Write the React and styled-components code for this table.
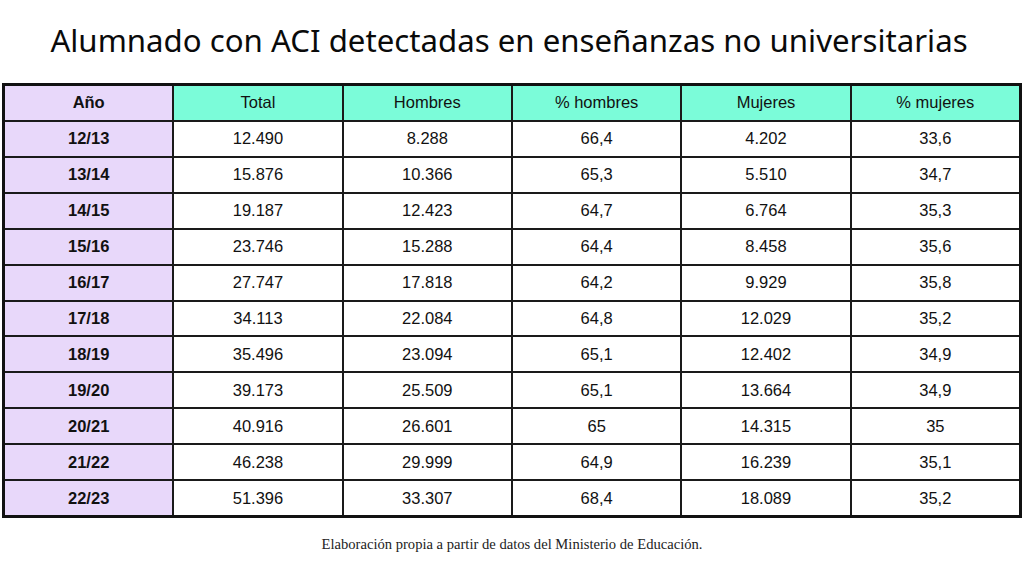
import React from "react";
import styled, { createGlobalStyle } from "styled-components";

const Global = createGlobalStyle`
  html, body { margin: 0; padding: 0; background: #ffffff; }
  body { width: 1024px; height: 576px; overflow: hidden; }
`;

const Page = styled.div`
  width: 1024px;
  height: 576px;
  display: flex;
  flex-direction: column;
  align-items: stretch;
  background: #fff;
`;

const Title = styled.h1`
  margin: 0;
  height: 83px;
  display: flex;
  align-items: center;
  justify-content: center;
  padding-right: 6px;
  padding-bottom: 4px;
  box-sizing: border-box;
  font-family: "Noto Sans", "DejaVu Sans", sans-serif;
  font-weight: 400;
  font-size: 31.2px;
  color: #0a0a0a;
`;

const TableWrap = styled.div`
  margin: 0 2px;
  height: 435px;
  box-sizing: border-box;
  border: 3px solid #111;
  background: #1a1a1a;
  display: grid;
  grid-template-columns: repeat(6, 1fr);
  grid-template-rows: repeat(12, 1fr);
  gap: 2px;
`;

const Cell = styled.div`
  display: flex;
  align-items: center;
  justify-content: center;
  font-family: "Liberation Sans", Arial, sans-serif;
  font-size: 16.5px;
  color: #111;
  font-weight: ${(p) => (p.$bold ? 700 : 400)};
  background: ${(p) =>
    p.$kind === "year" ? "#e8d8fa" : p.$kind === "head" ? "#7bfcd9" : "#ffffff"};
`;

const Footer = styled.p`
  margin: 0;
  padding-top: 18px;
  text-align: center;
  font-family: "Liberation Serif", "DejaVu Serif", serif;
  font-size: 14.6px;
  color: #222;
`;

const headers = ["Total", "Hombres", "% hombres", "Mujeres", "% mujeres"];

const rows = [
  ["12/13", "12.490", "8.288", "66,4", "4.202", "33,6"],
  ["13/14", "15.876", "10.366", "65,3", "5.510", "34,7"],
  ["14/15", "19.187", "12.423", "64,7", "6.764", "35,3"],
  ["15/16", "23.746", "15.288", "64,4", "8.458", "35,6"],
  ["16/17", "27.747", "17.818", "64,2", "9.929", "35,8"],
  ["17/18", "34.113", "22.084", "64,8", "12.029", "35,2"],
  ["18/19", "35.496", "23.094", "65,1", "12.402", "34,9"],
  ["19/20", "39.173", "25.509", "65,1", "13.664", "34,9"],
  ["20/21", "40.916", "26.601", "65", "14.315", "35"],
  ["21/22", "46.238", "29.999", "64,9", "16.239", "35,1"],
  ["22/23", "51.396", "33.307", "68,4", "18.089", "35,2"],
];

export default function App() {
  return (
    <Page>
      <Global />
      <Title>Alumnado con ACI detectadas en enseñanzas no universitarias</Title>
      <TableWrap>
        <Cell $kind="year" $bold>Año</Cell>
        {headers.map((h) => (
          <Cell key={h} $kind="head">{h}</Cell>
        ))}
        {rows.map((r) =>
          r.map((v, i) => (
            <Cell key={r[0] + i} $kind={i === 0 ? "year" : "data"} $bold={i === 0}>
              {v}
            </Cell>
          ))
        )}
      </TableWrap>
      <Footer>Elaboración propia a partir de datos del Ministerio de Educación.</Footer>
    </Page>
  );
}
